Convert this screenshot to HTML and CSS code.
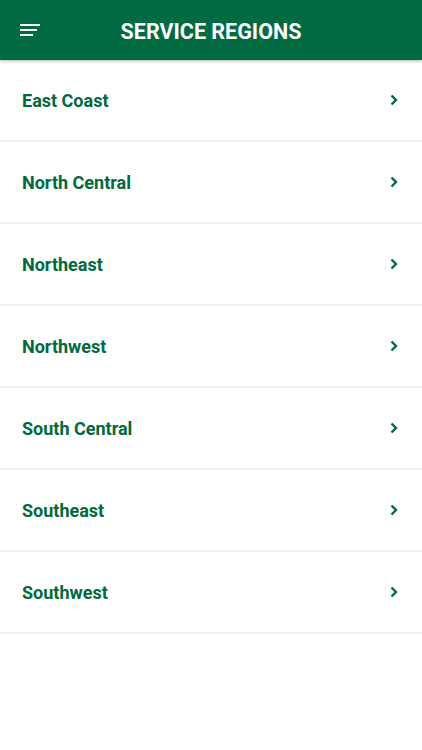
FILE: index.html
```html
<!DOCTYPE html>
<html>
<head>
<meta charset="utf-8">
<link rel="stylesheet" href="styles.css">
</head>
<body>
<header class="topbar">
  <svg class="menu" width="20" height="12" viewBox="0 0 20 12">
    <rect x="0" y="0" width="20" height="2" fill="#fff"/>
    <rect x="0" y="5" width="17" height="2" fill="#fff"/>
    <rect x="0" y="10" width="13" height="2" fill="#fff"/>
  </svg>
  <h1 class="title">SERVICE REGIONS</h1>
</header>
<ul class="list">
  <li class="row"><span>East Coast</span><svg class="chev" width="8" height="12" viewBox="0 0 8 12"><polyline points="1.5,1.5 6,6 1.5,10.5" fill="none" stroke="#006a3e" stroke-width="2.4"/></svg></li>
  <li class="row"><span>North Central</span><svg class="chev" width="8" height="12" viewBox="0 0 8 12"><polyline points="1.5,1.5 6,6 1.5,10.5" fill="none" stroke="#006a3e" stroke-width="2.4"/></svg></li>
  <li class="row"><span>Northeast</span><svg class="chev" width="8" height="12" viewBox="0 0 8 12"><polyline points="1.5,1.5 6,6 1.5,10.5" fill="none" stroke="#006a3e" stroke-width="2.4"/></svg></li>
  <li class="row"><span>Northwest</span><svg class="chev" width="8" height="12" viewBox="0 0 8 12"><polyline points="1.5,1.5 6,6 1.5,10.5" fill="none" stroke="#006a3e" stroke-width="2.4"/></svg></li>
  <li class="row"><span>South Central</span><svg class="chev" width="8" height="12" viewBox="0 0 8 12"><polyline points="1.5,1.5 6,6 1.5,10.5" fill="none" stroke="#006a3e" stroke-width="2.4"/></svg></li>
  <li class="row"><span>Southeast</span><svg class="chev" width="8" height="12" viewBox="0 0 8 12"><polyline points="1.5,1.5 6,6 1.5,10.5" fill="none" stroke="#006a3e" stroke-width="2.4"/></svg></li>
  <li class="row"><span>Southwest</span><svg class="chev" width="8" height="12" viewBox="0 0 8 12"><polyline points="1.5,1.5 6,6 1.5,10.5" fill="none" stroke="#006a3e" stroke-width="2.4"/></svg></li>
</ul>
</body>
</html>
```
FILE: styles.css
```css
* { box-sizing: border-box; }
html, body { margin: 0; padding: 0; background: #fff; }
body { font-family: Roboto, "Liberation Sans", sans-serif; width: 422px; }
.topbar {
  position: relative;
  height: 60px;
  background: #006a41;
  display: flex;
  align-items: center;
  justify-content: center;
  box-shadow: 0 1px 3px rgba(0,0,0,0.3);
  z-index: 1;
}
.menu { position: absolute; left: 20px; top: 24px; }
.title {
  margin: 0;
  padding-top: 2px;
  color: #fff;
  font-size: 21.5px;
  font-weight: 700;
  letter-spacing: 0;
}
.list { list-style: none; margin: 0; padding: 0; }
.row {
  height: 82px;
  border-bottom: 2px solid #efefef;
  display: flex;
  align-items: center;
  justify-content: space-between;
  padding: 0 24px 0 22px;
  color: #006a3e;
  font-size: 18px;
  font-weight: 700;
}
.chev { margin-top: -1px; }
```
